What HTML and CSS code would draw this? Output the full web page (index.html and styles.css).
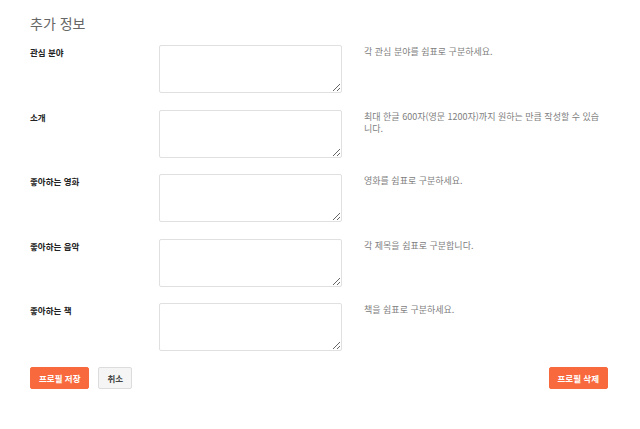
FILE: index.html
```html
<!DOCTYPE html>
<html lang="ko">
<head>
  <meta charset="UTF-8" />
  <title>추가 정보</title>
  <link rel="stylesheet" href="styles.css">
</head>
<body>
  <div class="page">
    <h2 class="title">추가 정보</h2>
    <div class="field">
      <label class="name">관심 분야</label>
      <textarea class="box"></textarea>
      <p class="help">각 관심 분야를 쉼표로 구분하세요.</p>
    </div>
    <div class="field">
      <label class="name">소개</label>
      <textarea class="box"></textarea>
      <p class="help">최대 한글 600자(영문 1200자)까지 원하는 만큼 작성할 수 있습니다.</p>
    </div>
    <div class="field">
      <label class="name">좋아하는 영화</label>
      <textarea class="box"></textarea>
      <p class="help">영화를 쉼표로 구분하세요.</p>
    </div>
    <div class="field">
      <label class="name">좋아하는 음악</label>
      <textarea class="box"></textarea>
      <p class="help">각 제목을 쉼표로 구분합니다.</p>
    </div>
    <div class="field">
      <label class="name">좋아하는 책</label>
      <textarea class="box"></textarea>
      <p class="help">책을 쉼표로 구분하세요.</p>
    </div>
    <div class="actions">
      <button type="button" class="btn primary">프로필 저장</button>
      <button type="button" class="btn plain">취소</button>
      <button type="button" class="btn primary right">프로필 삭제</button>
    </div>
  </div>
</body>
</html>
```

FILE: styles.css
```css
body { margin: 0; background: #fff; font-family: "Noto Sans CJK KR", "Noto Sans", sans-serif; color: #222; }
.page { width: 578px; padding: 14px 0 0 30px; }
.title { margin: 0 0 13px; font-size: 14px; font-weight: normal; color: #666; line-height: 18px; }
.field { display: grid; grid-template-columns: 129px 183px 264px; align-items: start; height: 64.5px; }
.name { font-size: 8.5px; font-weight: bold; color: #222; line-height: 12px; padding-top: 1px; }
.box { width: 183px; height: 48px; box-sizing: border-box; margin: 0; border: 1px solid #e0e0e0; border-radius: 2px; resize: vertical; padding: 2px; font-size: 9px; }
.help { margin: 0 0 0 22px; font-size: 9px; color: #808080; line-height: 12px; padding-top: 1px; word-break: break-all; }
.actions { display: flex; align-items: center; gap: 9px; margin-top: -1px; }
.btn { height: 22px; padding: 0 8px; font-family: inherit; font-size: 8.5px; font-weight: bold; border-radius: 2px; cursor: pointer; }
.primary { background: #f8693d; color: #fff; border: 1px solid #f8693d; }
.plain { background: #f5f5f5; color: #444; border: 1px solid #dcdcdc; }
.right { margin-left: auto; }
```
